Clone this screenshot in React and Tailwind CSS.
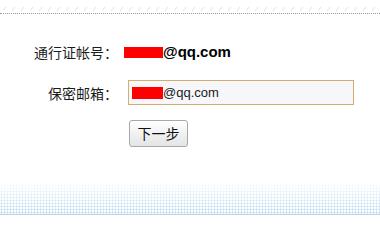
export default function App() {
  const cjk = { fontFamily: '"Noto Sans CJK SC", "Liberation Sans", sans-serif' };
  return (
    <div className="w-[380px] h-[237px] bg-white overflow-hidden flex flex-col" style={cjk}>
      <div className="h-[13px] shrink-0">
        <svg width="380" height="13" className="block">
          <defs>
            <pattern id="sl" width="9" height="13" patternUnits="userSpaceOnUse">
              <line x1="3" y1="11" x2="6" y2="7" stroke="#e2e2e2" strokeWidth="1" />
            </pattern>
          </defs>
          <rect width="380" height="13" fill="url(#sl)" />
        </svg>
      </div>
      <div className="h-0 border-b border-dotted border-[#9a9a9a] shrink-0" />

      <div className="mt-[28px] flex items-center h-[20px] shrink-0">
        <div className="w-[118px] text-right text-[14px] leading-[20px] text-[#1a1a1a]">通行证帐号：</div>
        <div className="ml-[6px] flex items-center">
          <span className="inline-block w-[39px] h-[11px] bg-[#ff0000]" />
          <span className="text-[15px] font-bold text-black leading-[20px]" style={{ fontFamily: '"Liberation Sans", Arial, sans-serif' }}>@qq.com</span>
        </div>
      </div>

      <div className="mt-[18px] flex items-center h-[25px] shrink-0">
        <div className="w-[118px] text-right text-[14px] leading-[20px] text-[#1a1a1a]">保密邮箱：</div>
        <div className="ml-[10px] w-[226px] h-[25px] border border-[#d3ae6c] bg-[#f7f7fb] flex items-center pl-[3px]">
          <span className="inline-block w-[31px] h-[12px] bg-[#ff0000]" />
          <span className="text-[13px] text-[#1a1a1a] leading-[20px]" style={{ fontFamily: '"Liberation Sans", Arial, sans-serif' }}>@qq.com</span>
        </div>
      </div>

      <div className="mt-[15px] flex shrink-0">
        <button className="ml-[129px] w-[59px] h-[27px] border border-[#a8a8a8] rounded-[3px] bg-gradient-to-b from-[#ffffff] to-[#e4e4e4] text-[14px] text-[#111] flex items-center justify-center" style={cjk}>下一步</button>
      </div>

      <div className="mt-[37px] h-[31px] shrink-0 border-b border-[#b9d3e3] bg-[radial-gradient(circle,#b9dbf2_0.9px,transparent_1.2px)] bg-[length:3px_3px]">
        <div className="h-full bg-gradient-to-b from-[rgba(255,255,255,0.9)] to-[rgba(255,255,255,0)]" />
      </div>
    </div>
  );
}
